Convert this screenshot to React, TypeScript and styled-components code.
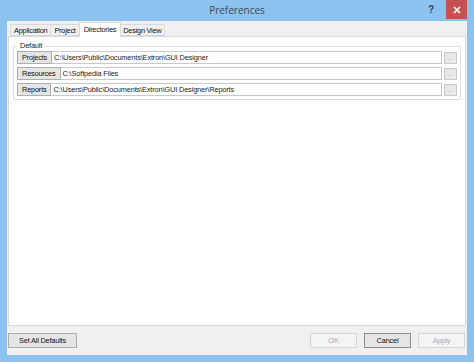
import React from "react";
import styled, { createGlobalStyle } from "styled-components";

const GlobalStyle = createGlobalStyle`
  html, body {
    margin: 0;
    padding: 0;
    background: #8cc3ee;
  }
  body {
    font-family: "Liberation Sans", Arial, sans-serif;
  }
`;

const tabs = [
  { id: 1, label: "Application", active: false },
  { id: 2, label: "Project", active: false },
  { id: 3, label: "Directories", active: true },
  { id: 4, label: "Design View", active: false },
];

const dirs = [
  { id: 1, name: "Projects", path: "C:\\Users\\Public\\Documents\\Extron\\GUI Designer" },
  { id: 2, name: "Resources", path: "C:\\Softpedia Files" },
  { id: 3, name: "Reports", path: "C:\\Users\\Public\\Documents\\Extron\\GUI Designer\\Reports" },
];

const App = () => {
  return (
    <>
      <GlobalStyle />
      <Window>
        <TitleBar>
          <Title>Preferences</Title>
          <HelpBtn>?</HelpBtn>
          <CloseBtn>
            <svg width="8" height="8" viewBox="0 0 8 8">
              <path d="M1 1 L7 7 M7 1 L1 7" stroke="#fff" strokeWidth="1.6" />
            </svg>
          </CloseBtn>
        </TitleBar>
        <Client>
          <TabRow>
            {tabs.map((t) => (
              <Tab key={t.id} active={t.active}>
                {t.label}
              </Tab>
            ))}
          </TabRow>
          <TabPage>
            <Group>
              <GroupLabel>Default</GroupLabel>
              {dirs.map((d) => (
                <DirRow key={d.id}>
                  <DirButton>{d.name}</DirButton>
                  <PathField>{d.path}</PathField>
                  <BrowseBtn>...</BrowseBtn>
                </DirRow>
              ))}
            </Group>
          </TabPage>
          <Footer>
            <DlgButton wide>Set All Defaults</DlgButton>
            <Spacer />
            <DlgButton disabled>OK</DlgButton>
            <DlgButton focused>Cancel</DlgButton>
            <DlgButton disabled>Apply</DlgButton>
          </Footer>
        </Client>
      </Window>
    </>
  );
};

export default App;

const Window = styled.div`
  width: 474px;
  height: 362px;
  box-sizing: border-box;
  padding: 0 7px 7px 7px;
  display: flex;
  flex-direction: column;
  background: #8cc3ee;
`;

const TitleBar = styled.div`
  height: 21px;
  position: relative;
  display: flex;
  align-items: center;
  justify-content: center;
`;

const Title = styled.div`
  font-family: "Open Sans", "Liberation Sans", sans-serif;
  font-size: 10px;
  color: #3c4a5c;
  margin-top: -1px;
`;

const HelpBtn = styled.div`
  position: absolute;
  right: 33px;
  top: 4px;
  font-family: "Liberation Sans", sans-serif;
  font-weight: bold;
  font-size: 10px;
  color: #2a4a70;
`;

const CloseBtn = styled.div`
  position: absolute;
  right: 0;
  top: 0;
  width: 21px;
  height: 19px;
  background: #c75050;
  display: flex;
  align-items: center;
  justify-content: center;
`;

const Client = styled.div`
  flex: 1;
  background: #f0f0f0;
  display: flex;
  flex-direction: column;
  padding: 1px 1px 0 1px;
`;

const TabRow = styled.div`
  display: flex;
  align-items: flex-end;
  padding-left: 2px;
  height: 14px;
  position: relative;
  z-index: 1;
`;

const Tab = styled.div<{ active?: boolean }>`
  font-size: 7.4px;
  letter-spacing: -0.25px;
  color: #111;
  height: ${(p) => (p.active ? "15px" : "12px")};
  line-height: ${(p) => (p.active ? "13px" : "12px")};
  padding: 0 ${(p) => (p.active ? "4px" : "3px")};
  margin: ${(p) => (p.active ? "0 -1px -1px -1px" : "0")};
  border: 1px solid #d9d9d9;
  border-bottom: ${(p) => (p.active ? "none" : "1px solid #d9d9d9")};
  background: ${(p) => (p.active ? "#fff" : "#f0f0f0")};
  border-left-width: ${(p) => (p.active ? "1px" : "0")};
  &:first-child {
    border-left-width: 1px;
  }
  box-sizing: border-box;
  position: relative;
  z-index: ${(p) => (p.active ? 2 : 1)};
`;

const TabPage = styled.div`
  flex: 1;
  background: #fff;
  border: 1px solid #d9d9d9;
  padding: 5px 4px;
`;

const Group = styled.div`
  border: 1px solid #dcdcdc;
  border-radius: 2px;
  margin-top: 4px;
  padding: 4px 3px 3px 3px;
  position: relative;
  display: flex;
  flex-direction: column;
  gap: 3px;
`;

const GroupLabel = styled.div`
  position: absolute;
  top: -6px;
  left: 4px;
  background: #fff;
  padding: 0 2px;
  font-size: 7.4px;
  letter-spacing: -0.2px;
  color: #222;
`;

const DirRow = styled.div`
  display: flex;
  align-items: center;
  height: 13px;
`;

const DirButton = styled.div`
  height: 13px;
  box-sizing: border-box;
  border: 1px solid #adadad;
  background: #e5e5e5;
  font-size: 7.4px;
  letter-spacing: -0.2px;
  line-height: 11px;
  padding: 0 4px;
  color: #111;
`;

const PathField = styled.div`
  flex: 1;
  height: 13px;
  box-sizing: border-box;
  border: 1px solid #c9c9c9;
  border-left: none;
  background: #fff;
  font-size: 7.4px;
  letter-spacing: -0.15px;
  line-height: 11px;
  padding-left: 2px;
  color: #222;
  white-space: nowrap;
  overflow: hidden;
`;

const BrowseBtn = styled.div`
  width: 13px;
  height: 12px;
  margin-left: 2px;
  box-sizing: border-box;
  border: 1px solid #c9c9c9;
  background: #e8e8e8;
  font-size: 6px;
  line-height: 10px;
  text-align: center;
  color: #999;
`;

const Footer = styled.div`
  height: 29px;
  display: flex;
  align-items: center;
  gap: 7px;
  padding: 0 1px 0 0;
`;

const Spacer = styled.div`
  flex: 1;
`;

const DlgButton = styled.div<{ disabled?: boolean; focused?: boolean; wide?: boolean }>`
  width: ${(p) => (p.wide ? "69px" : "47px")};
  height: 15px;
  box-sizing: border-box;
  border: 1px solid ${(p) => (p.disabled ? "#d5d5d5" : p.focused ? "#8c8c8c" : "#adadad")};
  background: ${(p) => (p.disabled ? "#f4f4f4" : "#e5e5e5")};
  color: ${(p) => (p.disabled ? "#a8a8a8" : "#111")};
  font-size: 7.4px;
  letter-spacing: -0.2px;
  line-height: 13px;
  text-align: center;
`;
